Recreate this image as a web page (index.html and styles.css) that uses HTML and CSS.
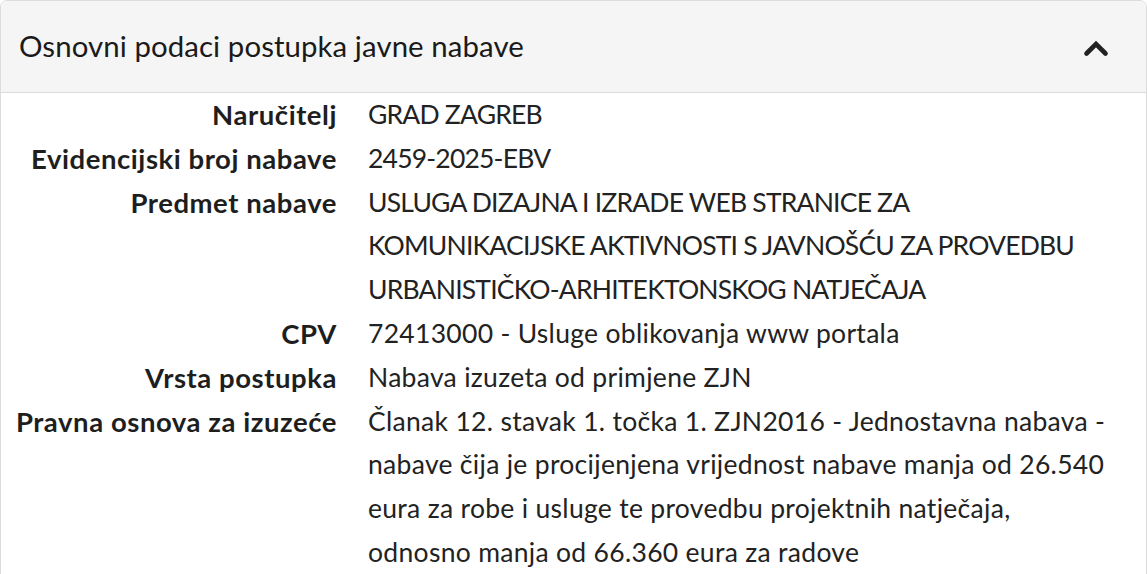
FILE: index.html
```html
<!DOCTYPE html>
<html lang="hr">
<head>
<meta charset="utf-8">
<title>Osnovni podaci postupka javne nabave</title>
<link rel="stylesheet" href="styles.css">
</head>
<body>
<section class="panel">
  <header class="panel-heading">
    <h2 class="panel-title">Osnovni podaci postupka javne nabave</h2>
    <svg class="chevron" width="26" height="18" viewBox="0 0 26 18" aria-hidden="true">
      <polyline points="3.5,14.5 13,5 22.5,14.5" fill="none" stroke="#222" stroke-width="4.6" stroke-linecap="round" stroke-linejoin="miter"/>
    </svg>
  </header>
  <dl class="details">
    <dt>Naručitelj</dt>
    <dd class="caps">GRAD ZAGREB</dd>
    <dt>Evidencijski broj nabave</dt>
    <dd class="caps">2459-2025-EBV</dd>
    <dt>Predmet nabave</dt>
    <dd class="caps">USLUGA DIZAJNA I IZRADE WEB STRANICE ZA KOMUNIKACIJSKE AKTIVNOSTI S JAVNOŠĆU ZA PROVEDBU URBANISTIČKO-ARHITEKTONSKOG NATJEČAJA</dd>
    <dt>CPV</dt>
    <dd>72413000 - Usluge oblikovanja www portala</dd>
    <dt>Vrsta postupka</dt>
    <dd>Nabava izuzeta od primjene ZJN</dd>
    <dt>Pravna osnova za izuzeće</dt>
    <dd>Članak 12. stavak 1. točka 1. ZJN2016 - Jednostavna nabava - nabave čija je procijenjena vrijednost nabave manja od 26.540 eura za robe i usluge te provedbu projektnih natječaja, odnosno manja od 66.360 eura za radove</dd>
  </dl>
</section>
</body>
</html>
```
FILE: styles.css
```css
html, body {
  margin: 0;
  padding: 0;
  background: #fff;
}
body {
  font-family: Lato, "Noto Sans", sans-serif;
  color: #222;
}
.panel {
  border: 1px solid #dcdcdc;
  border-radius: 7px 7px 0 0;
  height: 620px;
  box-sizing: border-box;
  overflow: hidden;
}
.panel-heading {
  display: flex;
  align-items: center;
  justify-content: space-between;
  height: 92px;
  box-sizing: border-box;
  padding: 0 37px 3px 18px;
  background: #f5f5f5;
  border-bottom: 1px solid #dcdcdc;
}
.panel-title {
  margin: 0;
  font-size: 29.4px;
  font-weight: normal;
  color: #1a1a1a;
  letter-spacing: 0.08px;
}
.chevron {
  display: block;
  margin-top: 5px;
}
.details {
  display: grid;
  grid-template-columns: 322px 1fr;
  column-gap: 31px;
  margin: 0;
  padding: 0 34px 0 14px;
  font-size: 26.5px;
  line-height: 43.8px;
}
.details dt {
  font-size: 27.5px;
  letter-spacing: 0.55px;
  font-weight: bold;
  text-align: right;
  color: #1e1e1e;
}
.details dd {
  margin: 0;
  letter-spacing: 0.3px;
  color: #222;
}
.details dd.caps {
  letter-spacing: -0.8px;
}
```
